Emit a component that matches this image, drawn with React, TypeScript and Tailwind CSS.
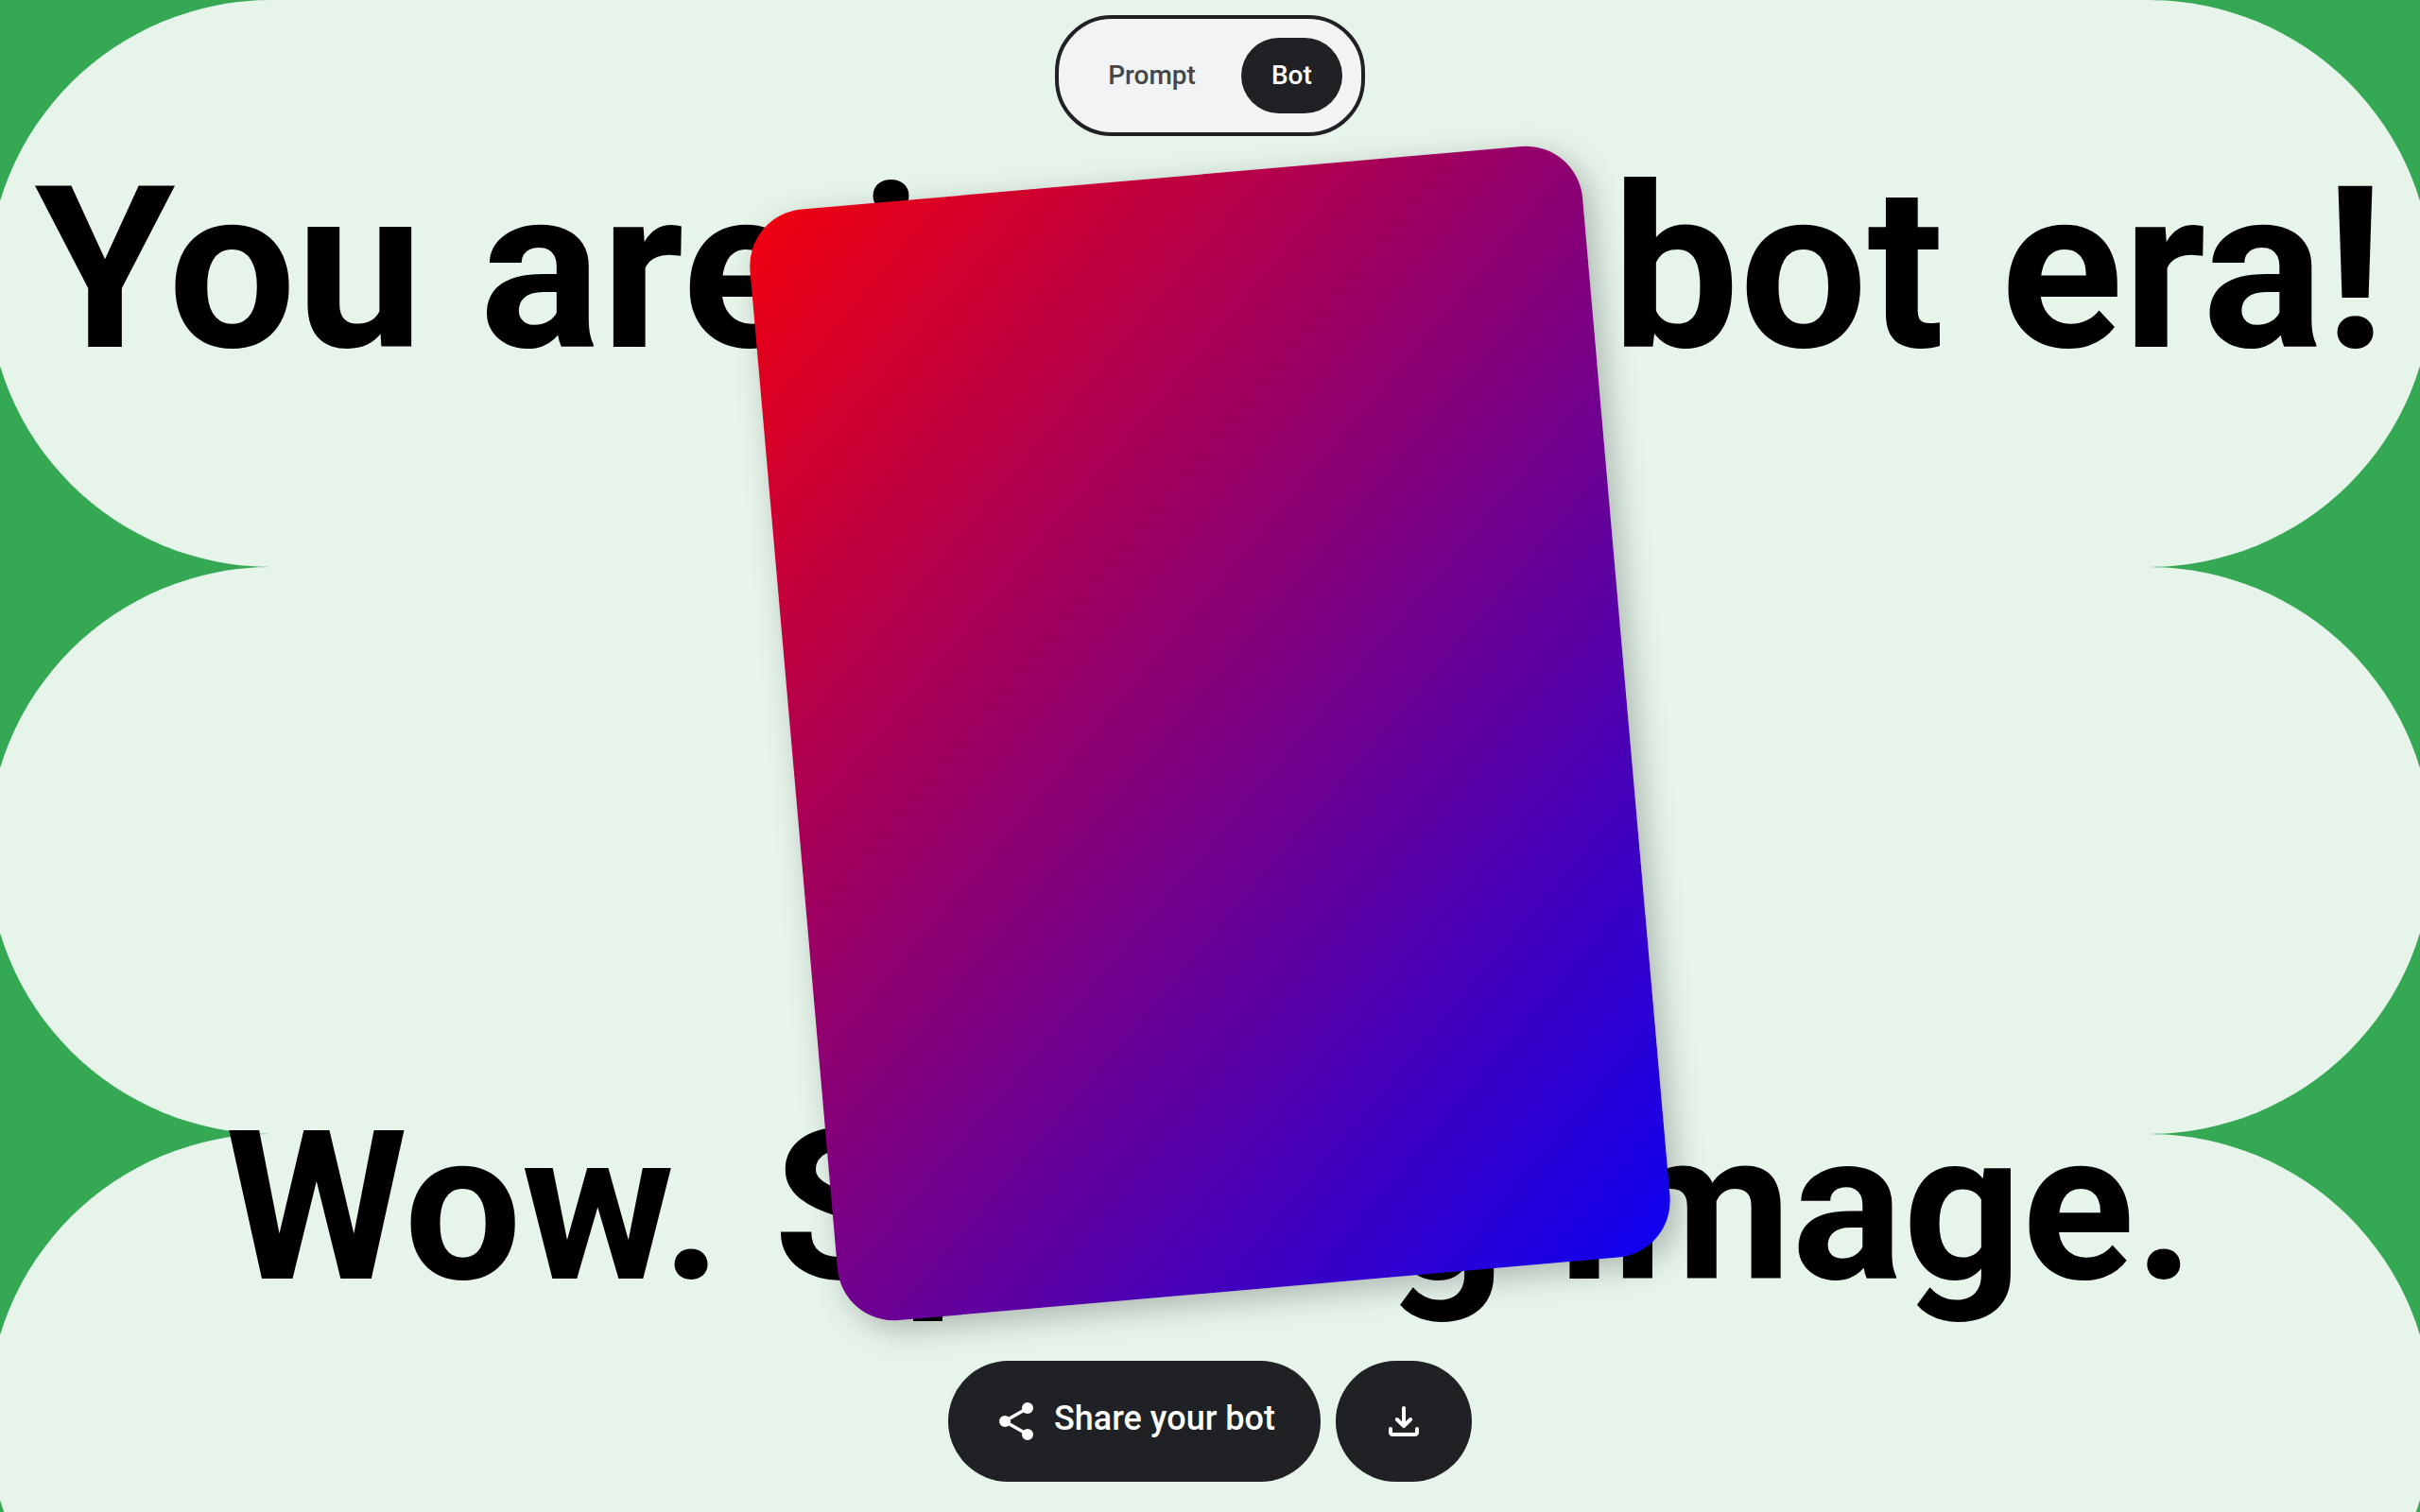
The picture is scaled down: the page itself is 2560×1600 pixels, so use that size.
const stripes = [0, 1, 2];

function ShareIcon() {
  return (
    <svg viewBox="0 0 24 24" className="size-12 shrink-0" fill="currentColor" aria-hidden="true">
      <path d="M18 22q-1.25 0-2.125-.875T15 19q0-.175.025-.363t.075-.337l-7.05-4.1q-.425.375-.95.588T6 15q-1.25 0-2.125-.875T3 12t.875-2.125T6 9q.575 0 1.1.213t.95.587l7.05-4.1q-.05-.15-.075-.337T15 5q0-1.25.875-2.125T18 2t2.125.875T21 5t-.875 2.125T18 8q-.575 0-1.1-.212t-.95-.588L8.9 11.3q.05.15.075.338T9 12t-.025.363t-.075.337l7.05 4.1q.425-.375.95-.587T18 16q1.25 0 2.125.875T21 19t-.875 2.125T18 22" />
    </svg>
  );
}

function DownloadIcon() {
  return (
    <svg viewBox="0 0 24 24" className="size-12 shrink-0" fill="currentColor" aria-hidden="true">
      <path d="M12 15.575q-.2 0-.375-.062T11.3 15.3l-3.6-3.6q-.3-.3-.288-.7t.288-.7q.3-.3.713-.312t.712.287L11 12.15V5q0-.425.288-.712T12 4t.713.288T13 5v7.15l1.875-1.875q.3-.3.713-.288t.712.313q.275.3.288.7t-.288.7l-3.6 3.6q-.15.15-.325.213t-.375.062M6 20q-.825 0-1.412-.587T4 18v-2q0-.425.288-.712T5 15t.713.288T6 16v2h12v-2q0-.425.288-.712T19 15t.713.288T20 16v2q0 .825-.587 1.413T18 20z" />
    </svg>
  );
}

export default function App() {
  return (
    <div className="relative isolate flex h-screen flex-col overflow-hidden bg-[#34a853] font-[Roboto,sans-serif] text-black">
      <div className="absolute inset-0 -z-20 flex flex-col items-center" aria-hidden="true">
        {stripes.map((s) => (
          <div key={s} className="h-[600px] w-[101%] shrink-0 rounded-[300px] bg-[#e6f4ea]" />
        ))}
      </div>

      <header className="flex justify-center pt-4">
        <nav className="flex h-32 items-center gap-4 rounded-[60px] border-4 border-[#202124] bg-[#f1f3f4] px-5 text-[28px] font-medium">
          <button type="button" className="h-20 rounded-full px-8 text-[#444746]">Prompt</button>
          <button type="button" aria-pressed="true" className="h-20 rounded-full bg-[#202124] px-8 text-white">Bot</button>
        </nav>
      </header>

      <main className="grid min-h-0 flex-1 place-items-center">
        <div className="flex h-full w-full flex-col justify-between text-center font-bold whitespace-nowrap [grid-area:1/1]">
          <h1 className="text-[240px] leading-[282px]">You are in your bot era!</h1>
          <p className="text-[220px] leading-[260px]">Wow. Spitting image.</p>
        </div>
        <div
          role="img"
          aria-label="Generated bot"
          className="h-[1180px] w-[884px] -rotate-5 rounded-[60px] bg-[linear-gradient(135deg,#f2000d,#0d00f2)] shadow-[8px_10px_32px_rgba(0,0,0,0.25)] [grid-area:1/1]"
        />
      </main>

      <footer className="flex justify-center gap-4 py-8 text-white">
        <button type="button" className="flex h-32 items-start gap-4 rounded-full bg-[#202124] px-12 py-10 text-4xl leading-[42px] font-medium">
          <ShareIcon />
          <span>Share your bot</span>
        </button>
        <button type="button" aria-label="Download" className="flex h-32 items-center rounded-full bg-[#202124] px-12">
          <DownloadIcon />
        </button>
      </footer>
    </div>
  );
}
